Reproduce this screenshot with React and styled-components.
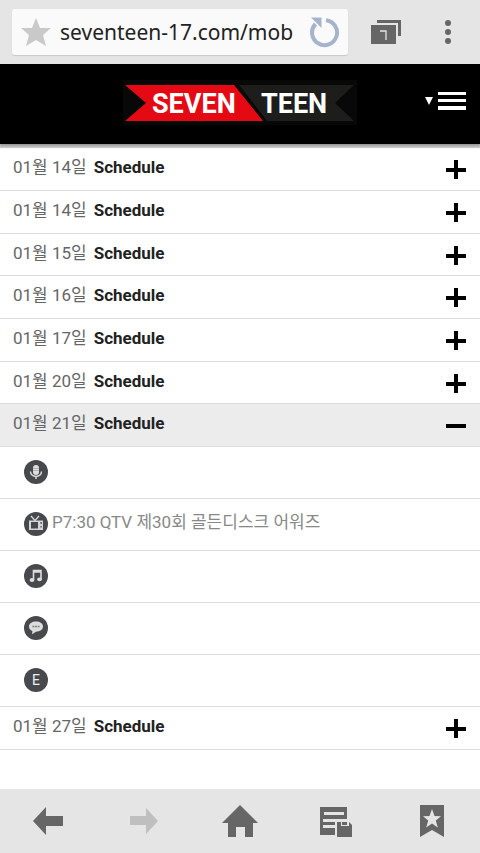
import React from 'react'
import styled, { createGlobalStyle } from 'styled-components'

const GlobalStyle = createGlobalStyle`
    *, *::before, *::after {
        box-sizing: border-box;
    }

    body {
        margin: 0;
        background-color: #fff;
        font-family: Roboto, "Noto Sans CJK KR", sans-serif;
    }

    button, input {
        border: 0;
        padding: 0;
        background: none;
        color: inherit;
        font: inherit;
    }

    svg {
        display: block;
        flex: none;
    }
`

const Page = styled.div`
    display: flex;
    flex-direction: column;
    min-height: 100vh;
`

const BrowserBar = styled.form`
    display: flex;
    align-items: center;
    height: 64px;
    padding: 0 8px 0 12px;
    background-color: #e5e5e5;
    color: #666;
`

const AddressBox = styled.div`
    display: flex;
    flex: 1;
    align-items: center;
    min-width: 0;
    height: 46px;
    padding: 0 8px;
    border-radius: 3px;
    background-color: #fafafa;
    box-shadow: 0 1px 1px #c8c8c8;
`

const Address = styled.input`
    flex: 1;
    min-width: 0;
    margin-left: 8px;
    color: #222;
    font-family: "Noto Sans", sans-serif;
    font-size: 21px;
    outline: none;
`

const IconButton = styled.button`
    display: flex;
    align-items: center;
    justify-content: center;
    width: ${ props => props.$wide ? '76px' : '32px' };
    height: 46px;
`

const BarButton = styled(IconButton)`
    width: 48px;
`

const SiteHeader = styled.header`
    position: relative;
    display: grid;
    grid-template-columns: 1fr auto 1fr;
    padding: 16px 14px;
    background-color: #000;
    box-shadow: 0 2px 2px #999, 0 4px 1px #ccc;
`

const LogoLink = styled.a`
    grid-column: 2;
`

const MenuButton = styled.button`
    justify-self: end;
`

const Schedule = styled.main`
    flex: 1;
    padding-top: 4px;
`

const Day = styled.section`
    border-bottom: 1px solid #dcdcdc;
`

const DayButton = styled.button`
    display: flex;
    align-items: center;
    width: 100%;
    height: ${ props => props.$short ? '41px' : '42px' };
    padding: 0 14px 0 13px;
    background-color: ${ props => props.$open ? '#ececec' : '#fff' };
    color: #000;
    text-align: left;
`

const DayLabel = styled.span`
    flex: 1;
    padding-bottom: 4px;
    color: #666;
    font-size: 17px;
    line-height: 24px;
`

const DayTitle = styled.strong`
    margin-left: 7px;
    color: #222;
    font-weight: 700;
`

const EventList = styled.ul`
    margin: 0;
    padding: 0;
    list-style: none;
`

const Event = styled.li`
    display: flex;
    align-items: center;
    height: 52px;
    padding: 0 24px 2px;
    border-top: 1px solid #dcdcdc;
`

const EventText = styled.span`
    margin-left: 4px;
    padding-bottom: 4px;
    color: #888;
    font-size: 17px;
    line-height: 24px;
`

const BottomBar = styled.nav`
    display: grid;
    grid-template-columns: repeat(5, 1fr);
    height: 64px;
    background-color: #e5e5e5;
    color: #666;
`

const NavButton = styled.button`
    display: flex;
    align-items: center;
    justify-content: center;

    &:disabled {
        color: #bfbfbf;
    }
`

const StarIcon = () => (
    <svg width="32" height="32" viewBox="0 0 32 32" fill="#c9c9c9">
        <path d="M16 2l4 10h11l-8 7 3 11-10-6-10 6 3-11-8-7h11z" />
    </svg>
)

const ReloadIcon = () => (
    <svg width="32" height="32" viewBox="0 0 32 32">
        <path d="M18 4.200A12.500 12.500 0 1 1 7.500 8" fill="none" stroke="#a6b3cc" strokeWidth="4" />
        <path d="M3 1.500h10.500v10.500z" fill="#a6b3cc" />
    </svg>
)

const TabsIcon = () => (
    <svg width="30" height="24" viewBox="0 0 30 24">
        <path d="M6 0h24v16h-3V3H6z" fill="#666" />
        <path d="M0 5h25v19H0z" fill="#666" />
        <path d="M9 11h6v9" fill="none" stroke="#e5e5e5" strokeWidth="1.300" />
    </svg>
)

const DotsIcon = () => (
    <svg width="6" height="24" viewBox="0 0 6 24" fill="#666">
        <circle cx="3" cy="3" r="3" />
        <circle cx="3" cy="12" r="3" />
        <circle cx="3" cy="21" r="3" />
    </svg>
)

const Logo = () => (
    <svg width="234" height="48" viewBox="0 0 234 48">
        <path d="M0 0h234v45H0z" fill="#080808" />
        <path d="M2 5h109l29 36H2l21-18z" fill="#e50914" />
        <path d="M116 5h115l-19 18 19 18h-87z" fill="#1d1d1b" />
        <g fill="#fff" fontFamily="Roboto, sans-serif" fontSize="27" fontWeight="700">
            <text x="29" y="33">SEVEN</text>
            <text x="138" y="33">TEEN</text>
        </g>
    </svg>
)

const MenuIcon = () => (
    <svg width="41" height="48" viewBox="0 0 41 48" fill="#fff">
        <path d="M0 17h8l-4 8z" />
        <path d="M13 12h28v3H13zM13 19h28v3H13zM13 26h28v4H13z" />
    </svg>
)

const ToggleIcon = ({ open }) => (
    <svg width="20" height="20" viewBox="0 0 20 20" stroke="currentColor" strokeWidth="4">
        <path d={open ? 'M0 11h20' : 'M0 11h20M10 1v20'} />
    </svg>
)

const eventIcons = {
    radio: (
        <>
            <rect x="9" y="5" width="6" height="10" rx="3" fill="#ddd" />
            <path d="M6.500 11.500c0 6.500 11 6.500 11 0M12 16v3" stroke="#ddd" strokeWidth="1.500" fill="none" />
            <path d="M9 8.500h6M9 10.500h6" stroke="#999" strokeWidth=".6" />
        </>
    ),
    tv: (
        <>
            <path d="M7 4l4 4.500L15 4" stroke="#ddd" strokeWidth="1.200" fill="none" />
            <path d="M5 8.500h14v9.500H5z" fill="#d5d5d5" />
            <path d="M7 10h7v6.500H7z" fill="#47494d" />
            <path d="M16.500 10h1.200v2h-1.200zM16.500 14h1.200v1.500h-1.200z" fill="#47494d" />
        </>
    ),
    music: (
        <>
            <path d="M9.500 16V6.500h7.500v8.500M9.500 8h7.500" stroke="#ddd" strokeWidth="1.600" fill="none" />
            <ellipse cx="8" cy="16" rx="2.400" ry="1.900" fill="#ddd" />
            <ellipse cx="15.500" cy="15.300" rx="2.400" ry="1.900" fill="#ddd" />
        </>
    ),
    talk: (
        <>
            <path d="M12 5.500c4 0 7 2 7 5s-3 5.200-7 5.200l-4 2.500.4-3.100C6.200 14.300 5 12.600 5 10.500c0-3 3-5 7-5z" fill="#ddd" />
            <path d="M8.500 10.500h7" stroke="#777" strokeWidth="1.600" strokeDasharray="1.800 .8" />
        </>
    ),
    event: <text x="12" y="17" textAnchor="middle" fill="#eee" fontFamily="Roboto, sans-serif" fontSize="14">E</text>
}

const EventIcon = ({ type }) => (
    <svg width="24" height="24" viewBox="0 0 24 24">
        <circle cx="12" cy="12" r="12" fill="#47494d" />
        {eventIcons[type]}
    </svg>
)

const ArrowIcon = ({ forward }) => (
    <svg width="30" height="30" viewBox="0 0 30 30" fill="currentColor">
        {forward
            ? <path d="M1 10h16V2l12 13-12 13v-9H1z" />
            : <path d="M0 15L13 1v9h17v10H13v9z" />}
    </svg>
)

const HomeIcon = () => (
    <svg width="36" height="34" viewBox="0 0 36 34" fill="currentColor">
        <path d="M18 1l18 18h-5v14h-8V23h-9v10H6V19H0z" />
    </svg>
)

const SavedIcon = () => (
    <svg width="32" height="32" viewBox="0 0 32 32">
        <path d="M0 2h27v28H0z" fill="currentColor" />
        <path d="M4 7h20v3H4zM3 14h24v3H3zM3 20h12v3H3z" fill="#e5e5e5" />
        <path d="M15 15h17v17H15z" fill="#e5e5e5" />
        <path d="M17 17h12l3 3v12H17z" fill="currentColor" />
        <path d="M21 17h8v4h-8z" fill="#e5e5e5" />
        <path d="M22 17h5v3h-5z" fill="currentColor" />
    </svg>
)

const BookmarkIcon = () => (
    <svg width="26" height="32" viewBox="0 0 26 32">
        <path d="M1 0h24v32l-12-7-12 7z" fill="currentColor" />
        <path d="M13 4l2.500 7 6.500.2-5.200 4.300 2 7L13 18.400 7.200 22.500l2-7L4 11.200l6.500-.2z" fill="#e5e5e5" />
    </svg>
)

const days = [
    { id: 1, date: '01월 14일' },
    { id: 2, date: '01월 14일' },
    { id: 3, date: '01월 15일' },
    { id: 4, date: '01월 16일' },
    { id: 5, date: '01월 17일' },
    { id: 6, date: '01월 20일' },
    {
        id: 7,
        date: '01월 21일',
        events: [
            { type: 'radio' },
            { type: 'tv', text: 'P7:30 QTV 제30회 골든디스크 어워즈' },
            { type: 'music' },
            { type: 'talk' },
            { type: 'event' }
        ]
    },
    { id: 8, date: '01월 27일' }
]

class App extends React.Component {
    state = {
        openDay: 7,
        address: 'seventeen-17.com/mob'
    }

    toggleDay = id => {
        this.setState({ openDay: this.state.openDay === id ? null : id })
    }

    renderDay = (day, index) => {
        const open = this.state.openDay === day.id

        return (
            <Day key={day.id}>
                <DayButton
                    type="button"
                    aria-expanded={open}
                    $open={open}
                    $short={index % 3 === 2}
                    onClick={() => this.toggleDay(day.id)}
                >
                    <DayLabel>
                        {day.date}
                        <DayTitle>Schedule</DayTitle>
                    </DayLabel>
                    <ToggleIcon open={open} />
                </DayButton>
                {open && day.events && (
                    <EventList>
                        {day.events.map(event => (
                            <Event key={event.type}>
                                <EventIcon type={event.type} />
                                {event.text && <EventText>{event.text}</EventText>}
                            </Event>
                        ))}
                    </EventList>
                )}
            </Day>
        )
    }

    render () {
        return (
            <Page>
                <GlobalStyle />
                <BrowserBar onSubmit={e => e.preventDefault()}>
                    <AddressBox>
                        <IconButton type="button" aria-label="Bookmark"><StarIcon /></IconButton>
                        <Address
                            aria-label="Address"
                            value={this.state.address}
                            onChange={e => this.setState({ address: e.target.value })}
                        />
                        <IconButton type="button" aria-label="Reload"><ReloadIcon /></IconButton>
                    </AddressBox>
                    <IconButton type="button" $wide aria-label="Tabs"><TabsIcon /></IconButton>
                    <BarButton type="button" aria-label="More"><DotsIcon /></BarButton>
                </BrowserBar>

                <SiteHeader>
                    <LogoLink href="#" aria-label="Seventeen"><Logo /></LogoLink>
                    <MenuButton type="button" aria-label="Menu"><MenuIcon /></MenuButton>
                </SiteHeader>

                <Schedule>{days.map(this.renderDay)}</Schedule>

                <BottomBar>
                    <NavButton type="button" aria-label="Back"><ArrowIcon /></NavButton>
                    <NavButton type="button" aria-label="Forward" disabled><ArrowIcon forward /></NavButton>
                    <NavButton type="button" aria-label="Home"><HomeIcon /></NavButton>
                    <NavButton type="button" aria-label="Saved pages"><SavedIcon /></NavButton>
                    <NavButton type="button" aria-label="Bookmarks"><BookmarkIcon /></NavButton>
                </BottomBar>
            </Page>
        )
    }
}

export default App
